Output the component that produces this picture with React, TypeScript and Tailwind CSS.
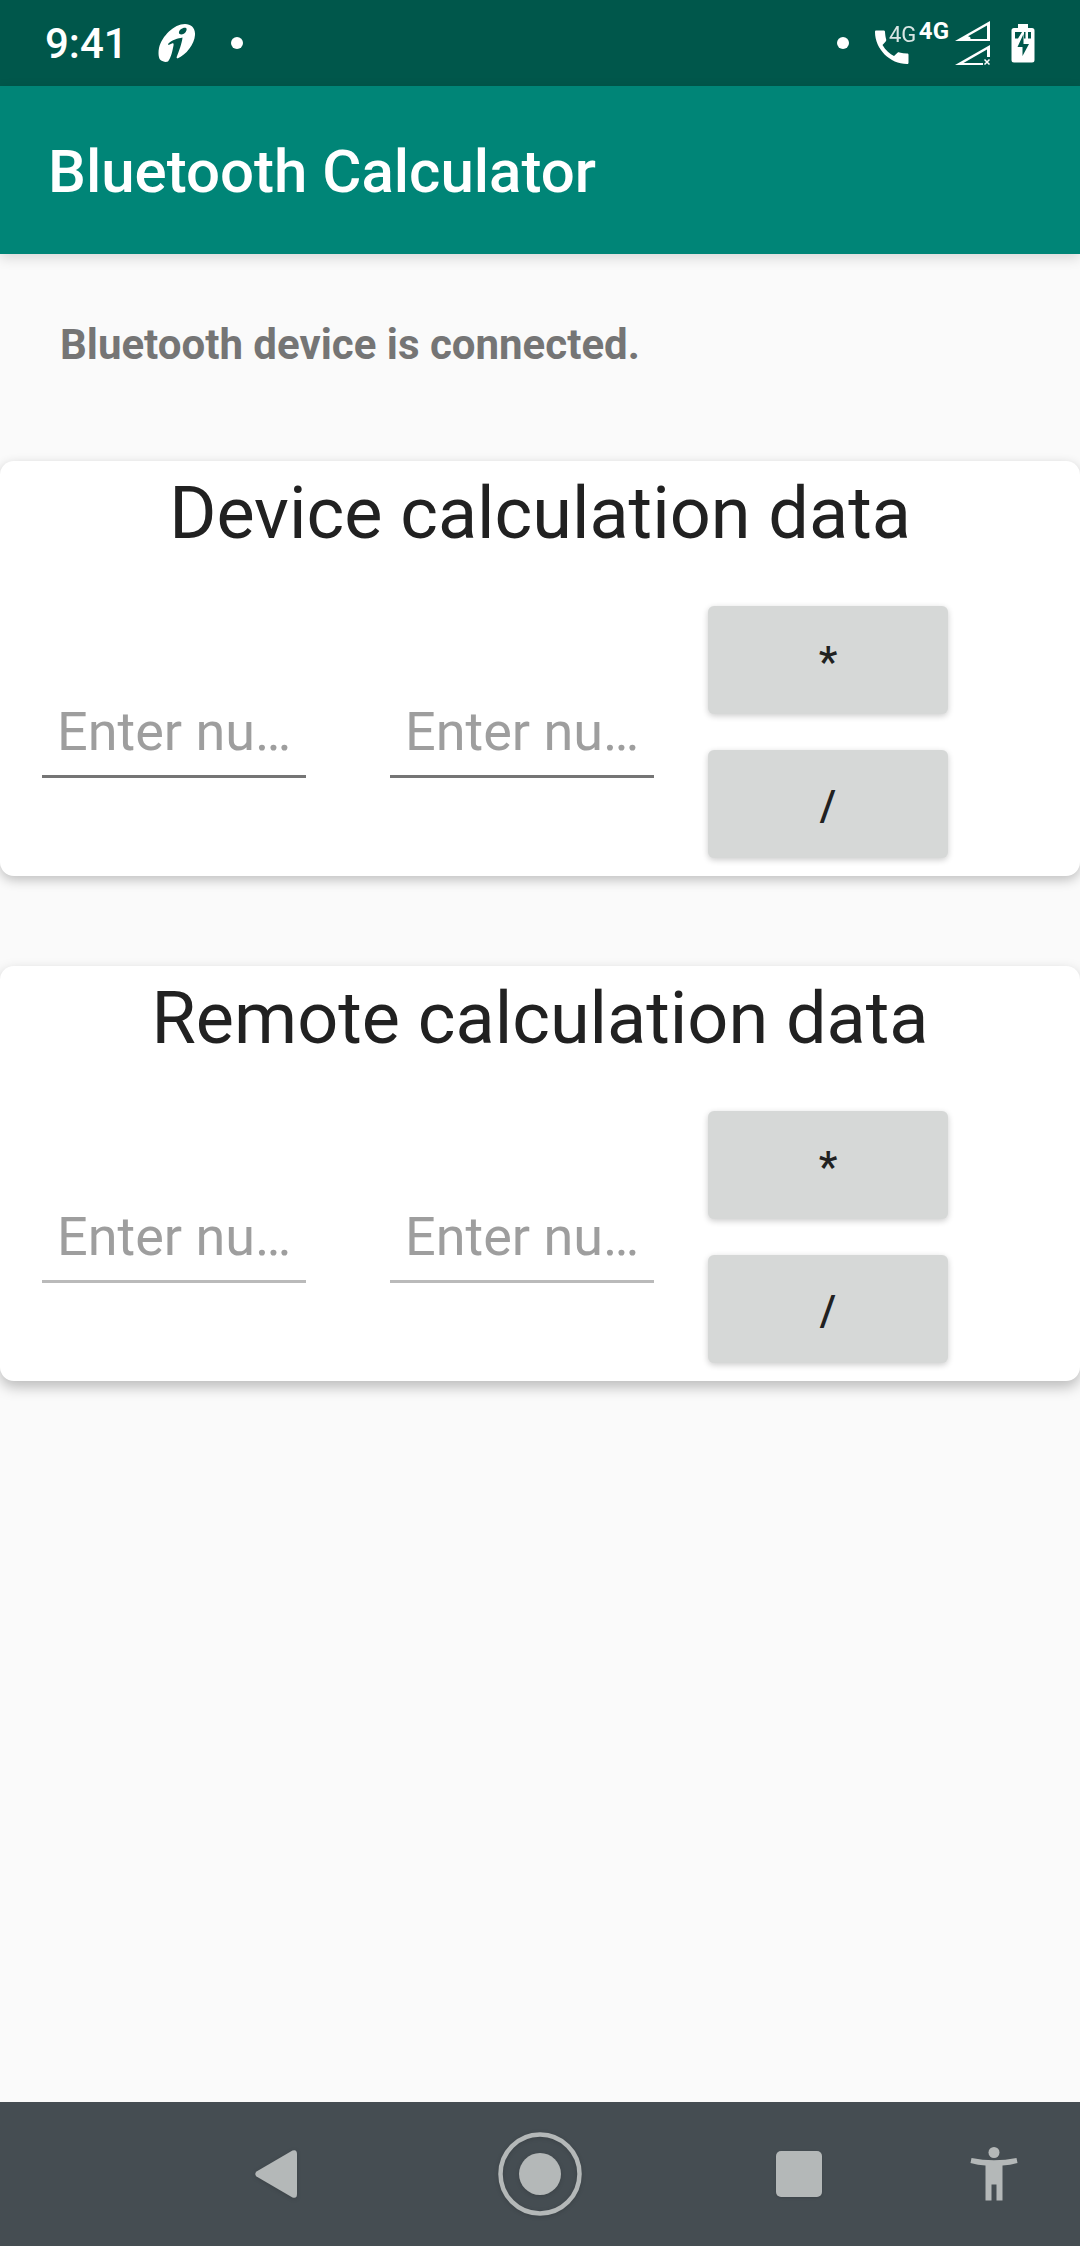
import React from "react";

function StatusBar() {
  return (
    <div className="flex h-[86px] items-center justify-between bg-[#00574b] px-[45px] text-white">
      <div className="flex items-center">
        <span className="pt-0.5 text-[42px] leading-[48px] font-medium">9:41</span>
        <svg className="ml-[30px] h-[38px] w-[38px]" viewBox="0 0 38 38" fill="currentColor" aria-hidden="true">
          <path
            fillRule="evenodd"
            d="M27 0C33 0 37.500 4 37 11C36.500 20 28 31 19.500 34.500L18.500 33.500C21 27 24 19 24.500 13.500C20 14.500 14 15.500 10 20L10.500 21L14 19.500C15.500 19 15.800 20 15.500 21.500C14.500 27 13 34 10 37.500C7.500 38.500 4.500 37.500 2.500 36C0.500 34 0 29 1 24C4 12 16 0 27 0ZM27.500 3.800C24 3.500 20.500 6.500 21 9C21.500 11.500 26.500 10.500 28 7.500C29 5.500 28.800 4 27.500 3.800Z"
          />
        </svg>
        <span className="ml-[35px] size-3 rounded-full bg-white" />
      </div>
      <div className="flex items-center">
        <span className="mr-[25px] size-3 rounded-full bg-white" />
        <svg className="h-11 w-[45px]" viewBox="0 0 45 44" fill="currentColor" aria-hidden="true">
          <path d="M2 9.500H9.500C10.500 9.500 11 10 11 11C11.200 14 11.500 16 12.200 18.500C12.400 19.300 12.200 20 11.700 20.500L8.500 24C11.500 29.500 16 33 20 35L23.500 31.800C24 31.300 24.700 31.200 25.400 31.400C28 32.200 30.500 32.500 33 32.600C34 32.600 34.500 33 34.500 34V41.500C34.500 42.500 34 43 33 43C16 43 1 28 1 11C1 10 1.300 9.500 2 9.500Z" />
          <text x="15" y="21" fontSize="22" opacity="0.85">4G</text>
        </svg>
        <span className="h-11 text-[24px] leading-5 font-bold">4G</span>
        <svg className="ml-1.5 h-11 w-9" viewBox="0 0 36 44" fill="none" aria-hidden="true">
          <path fill="#fff" fillRule="evenodd" d="M0 20L35 0V20ZM15.500 18H32V4.500L13 15.300Q16 16 15.500 18Z" />
          <path fill="#fff" d="M0 44L35 24V36H32V28.500L8.500 42H28V44Z" />
          <path stroke="#fff" strokeWidth="1.5" d="M29.500 38.500L34.500 43.500M34.500 38.500L29.500 43.500" />
        </svg>
        <svg className="ml-5 h-10 w-6" viewBox="0 0 24 40" aria-hidden="true">
          <path fill="#fff" d="M7 1H17V5H21Q23.500 5 23.500 7.500V37Q23.500 39.500 21 39.500H3Q0.500 39.500 0.500 37V7.500Q0.500 5 3 5H7Z" />
          <path fill="#00574b" d="M4 9H11L7 15.500H4ZM13 9H14.500V15.500H13ZM17 9H20V15.500H17Z" />
          <path fill="#00574b" d="M12.500 11V21H18L11.500 33V24H6.500Z" />
        </svg>
      </div>
    </div>
  );
}

interface CalcCardProps {
  id: string;
  title: string;
  cardShadow: string;
  inputBorder: string;
}

function CalcCard({ id, title, cardShadow, inputBorder }: CalcCardProps) {
  return (
    <section className={`rounded-[14px] bg-white pt-[11px] pb-[18px] ${cardShadow}`}>
      <h2 className="text-center text-[72px] leading-[84px] text-[#212121]">{title}</h2>
      <div className="mt-[50px] flex items-end pr-[132px] pl-[42px]">
        {["first", "second"].map((name) => (
          <input
            key={name}
            id={`${id}-${name}`}
            type="text"
            inputMode="numeric"
            aria-label={`${title}, ${name} number`}
            placeholder="Enter number"
            className={`mb-20 h-[78px] min-w-0 flex-1 border-b-3 pr-3 pb-[13px] pl-[15px] text-[54px] leading-[62px] text-ellipsis text-[#212121] outline-none first:mr-[84px] placeholder:text-[#9e9e9e] ${inputBorder}`}
          />
        ))}
        <div className="ml-[54px] flex w-60 flex-col gap-9">
          {["*", "/"].map((op) => (
            <button
              key={op}
              type="button"
              className="h-[108px] rounded-md bg-[#d6d8d7] pt-[3px] text-[42px] leading-[48px] font-medium text-[#212121] shadow-[0_2px_6px_rgba(0,0,0,0.2)]"
            >
              {op}
            </button>
          ))}
        </div>
      </div>
    </section>
  );
}

function NavBar() {
  return (
    <nav className="grid h-36 grid-cols-[268fr_260fr_258fr_132fr] place-items-center bg-[#454d52] pr-5 pl-[142px] text-[#b4b8b8]">
      <button type="button" aria-label="Back">
        <svg className="h-12 w-[42px] drop-shadow-sm" viewBox="0 0 42 48" fill="currentColor">
          <path d="M37.500 0.500Q42 -1 42 4V44Q42 49 37.500 47.500L1.500 26.500Q-1 24 1.500 21.500Z" />
        </svg>
      </button>
      <button type="button" aria-label="Home">
        <svg className="size-[84px] drop-shadow-sm" viewBox="0 0 84 84" fill="none">
          <circle cx="42" cy="42" r="39.500" stroke="currentColor" strokeWidth="4.500" />
          <circle cx="42" cy="42" r="21" fill="currentColor" />
        </svg>
      </button>
      <button type="button" aria-label="Recent apps">
        <span className="block size-[46px] rounded-[5px] bg-[#b4b8b8] shadow-sm" />
      </button>
      <button type="button" aria-label="Accessibility">
        <svg className="h-[54px] w-12" viewBox="0 0 48 54" fill="currentColor">
          <circle cx="24" cy="5.500" r="5.500" />
          <path d="M1.500 11Q24 15.500 46.500 11L47.500 16Q40 18 32.500 18.500V53.500H26.500V37.500H21.500V53.500H15.500V18.500Q8 18 0.500 16Z" />
        </svg>
      </button>
    </nav>
  );
}

export default function App() {
  return (
    <div className="flex min-h-screen flex-col bg-[#fafafa] font-['Roboto',sans-serif]">
      <StatusBar />
      <header className="flex h-[168px] items-center bg-[#008577] px-12 pt-1 shadow-[0_4px_12px_rgba(0,0,0,0.14)]">
        <h1 className="text-[60px] leading-[72px] font-medium text-white">Bluetooth Calculator</h1>
      </header>
      <main className="flex-1 pt-[67px]">
        <p className="px-[60px] text-[42px] leading-[48px] font-bold text-[#757575]">
          Bluetooth device is connected.
        </p>
        <div className="mt-[92px] flex flex-col gap-[90px]">
          <CalcCard
            id="device"
            title="Device calculation data"
            cardShadow="shadow-[0_4px_12px_rgba(0,0,0,0.24)]"
            inputBorder="border-[#757575]"
          />
          <CalcCard
            id="remote"
            title="Remote calculation data"
            cardShadow="shadow-[0_6px_14px_rgba(0,0,0,0.26)]"
            inputBorder="border-[#bababa]"
          />
        </div>
      </main>
      <NavBar />
    </div>
  );
}
